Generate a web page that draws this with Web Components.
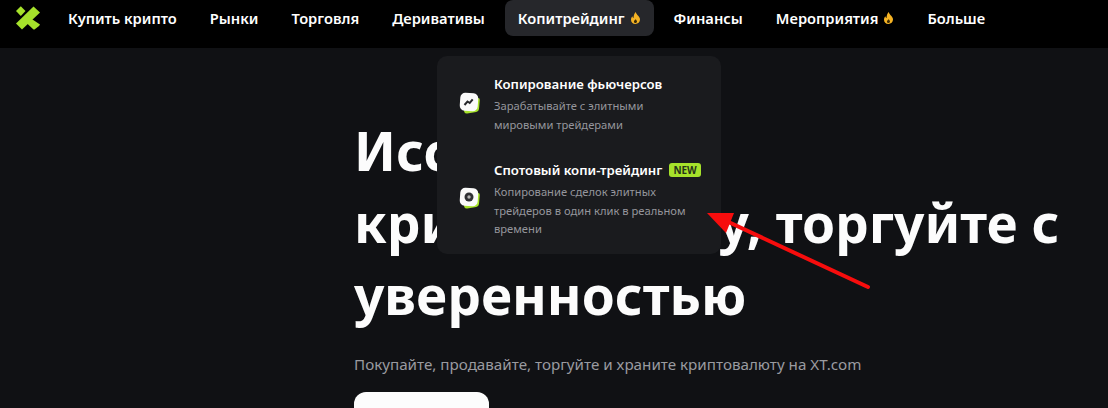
<!DOCTYPE html>
<html lang="ru">
<head>
<meta charset="utf-8">
<title>XT.com</title>
<style>
    html, body { margin: 0; height: 408px; overflow: hidden; background: #101114; }
    body { font-family: 'Noto Sans', 'Open Sans', sans-serif; position: relative; }
</style>
</head>
<body>
<xt-nav>
    <nav-item>Купить крипто</nav-item>
    <nav-item>Рынки</nav-item>
    <nav-item>Торговля</nav-item>
    <nav-item>Деривативы</nav-item>
    <nav-item active hot>Копитрейдинг</nav-item>
    <nav-item>Финансы</nav-item>
    <nav-item hot>Мероприятия</nav-item>
    <nav-item>Больше</nav-item>
</xt-nav>
<xt-hero></xt-hero>
<copy-menu>
    <menu-item title="Копирование фьючерсов" icon="chart">Зарабатывайте с элитными<br>мировыми трейдерами</menu-item>
    <menu-item title="Спотовый копи-трейдинг" icon="eye" badge="NEW">Копирование сделок элитных<br>трейдеров в один клик в реальном<br>времени</menu-item>
</copy-menu>
<red-arrow></red-arrow>

<script>
const FLAME = `<svg width="11" height="12" viewBox="0 0 11 12" style="display:block;margin-left:5px"><path fill="#f5b324" d="M5.800 0c.4 1.800 1.300 2.500 2.400 3.800C9.400 5.100 10 6.300 10 7.600 10 10.100 8 12 5.400 12 2.800 12 1 10.100 1 7.700c0-1.400.6-2.500 1.400-3.400.2 1 .6 1.500 1.200 1.800C3.500 3.800 4.200 1.500 5.800 0z"/><path fill="#3a2a05" d="M5.500 7.200c.9.800 1.500 1.500 1.500 2.400 0 .9-.7 1.500-1.600 1.500S3.900 10.500 3.900 9.600c0-.9.800-1.500 1.600-2.400z"/></svg>`;

class XtNav extends HTMLElement {
    constructor() {
        super();
        this.attachShadow({ mode: 'open' });
        this.shadowRoot.innerHTML = `
            <style>
                :host {
                    display: flex;
                    align-items: flex-start;
                    height: 48px;
                    background: #000;
                    box-sizing: border-box;
                }
                .logo {
                    width: 68px;
                    flex: none;
                    padding: 6px 0 0 16px;
                    box-sizing: border-box;
                }
                .logo svg { display: block; }
                .links {
                    display: flex;
                    gap: 7px;
                    margin-left: -13px;
                }
            </style>
            <div class="logo">
                <svg width="24" height="24" viewBox="0 0 24 24">
                    <path fill="#a6e22b" d="M17.500.5L24 6.500 6 23.500 0 17.500z"/>
                    <path fill="#a6e22b" d="M15 12.500l9 6-1 1.500-4.500 3.500h-1L9.500 16z"/>
                    <path fill="#a6e22b" d="M4.800.3l4.700 4.700-4.700 5L0 5z"/>
                </svg>
            </div>
            <div class="links"><slot></slot></div>
        `;
    }
}

class NavItem extends HTMLElement {
    constructor() {
        super();
        this.attachShadow({ mode: 'open' });
        this.shadowRoot.innerHTML = `
            <style>
                :host {
                    display: flex;
                    align-items: center;
                    height: 36px;
                    padding: 0 13px;
                    border-radius: 8px;
                    color: #fff;
                    font-size: 14.7px;
                    font-weight: 600;
                    white-space: nowrap;
                }
                :host([active]) { background: #26272b; }
            </style>
            <slot></slot><span id="flame"></span>
        `;
    }
    connectedCallback() {
        if (this.hasAttribute('hot')) {
            this.shadowRoot.querySelector('#flame').innerHTML = FLAME;
        }
    }
}

class XtHero extends HTMLElement {
    constructor() {
        super();
        this.attachShadow({ mode: 'open' });
        this.shadowRoot.innerHTML = `
            <style>
                :host {
                    display: block;
                    padding: 67px 0 0 354px;
                }
                h1 {
                    margin: 0;
                    color: #fcfcfc;
                    font-size: 53.2px;
                    font-weight: 700;
                    line-height: 72px;
                    white-space: nowrap;
                }
                p {
                    margin: 21px 0 0;
                    color: #9a9ba0;
                    font-size: 15.2px;
                    line-height: 24px;
                    white-space: nowrap;
                }
                .btn {
                    width: 135px;
                    height: 16px;
                    margin-top: 16px;
                    background: #fcfcfc;
                    border-radius: 12px 12px 0 0;
                }
            </style>
            <h1>Исследуйте<br>криптовалюту, торгуйте с<br>уверенностью</h1>
            <p>Покупайте, продавайте, торгуйте и храните криптовалюту на XT.com</p>
            <div class="btn"></div>
        `;
    }
}

class CopyMenu extends HTMLElement {
    constructor() {
        super();
        this.attachShadow({ mode: 'open' });
        this.shadowRoot.innerHTML = `
            <style>
                :host {
                    position: absolute;
                    left: 437px;
                    top: 56px;
                    width: 284px;
                    height: 198px;
                    padding-top: 18px;
                    box-sizing: border-box;
                    background: #1a1b1e;
                    border-radius: 10px;
                    display: flex;
                    flex-direction: column;
                    gap: 26px;
                }
            </style>
            <slot></slot>
        `;
    }
}

class MenuItem extends HTMLElement {
    constructor() {
        super();
        this.attachShadow({ mode: 'open' });
        const badge = this.getAttribute('badge');
        const mark = this.getAttribute('icon') === 'eye'
            ? `<circle cx="10" cy="10" r="4.500" fill="#2f3034"/><circle cx="10" cy="10" r="1.700" fill="#b5b5b5"/>`
            : `<path d="M5.500 13l3-3.500 2.200 1.500 3-3.700" fill="none" stroke="#26272b" stroke-width="2"/>`;
        this.shadowRoot.innerHTML = `
            <style>
                :host {
                    display: flex;
                    align-items: center;
                    gap: 13px;
                    padding-left: 22px;
                }
                svg { flex: none; display: block; margin-bottom: 3px; }
                .title {
                    display: flex;
                    align-items: center;
                    gap: 7px;
                    color: #fff;
                    font-size: 13.2px;
                    font-weight: 600;
                    line-height: 20px;
                    white-space: nowrap;
                }
                .badge {
                    background: #a6e22b;
                    color: #26331a;
                    font-size: 10px;
                    font-weight: 700;
                    line-height: 14px;
                    padding: 0 4px;
                    border-radius: 3px;
                }
                .desc {
                    margin-top: 3px;
                    color: #95969c;
                    font-size: 11.2px;
                    line-height: 18.5px;
                    white-space: nowrap;
                }
            </style>
            <svg width="22" height="22" viewBox="0 0 22 22">
                <path fill="#a6e22b" d="M5 6h14q2 0 1.800 2l-.8 9q-.3 2.500-2.800 3l-9 1.500q-2 .2-3-1.500z"/>
                <rect x="1" y="1" width="18" height="18" rx="5" fill="#fafafa" transform="rotate(4 10 10)"/>
                ${mark}
            </svg>
            <div>
                <div class="title">${this.getAttribute('title')}${badge ? `<span class="badge">${badge}</span>` : ''}</div>
                <div class="desc"><slot></slot></div>
            </div>
        `;
    }
}

class RedArrow extends HTMLElement {
    constructor() {
        super();
        this.attachShadow({ mode: 'open' });
        this.shadowRoot.innerHTML = `
            <style>
                :host { position: absolute; left: 700px; top: 205px; }
                svg { display: block; }
            </style>
            <svg width="175" height="90" viewBox="0 0 175 90">
                <path d="M168 82L22 14" stroke="#f70d0d" stroke-width="4" stroke-linecap="round"/>
                <path fill="#f70d0d" d="M7 8L34 8 26 28z"/>
            </svg>
        `;
    }
}

customElements.define('xt-nav', XtNav);
customElements.define('nav-item', NavItem);
customElements.define('xt-hero', XtHero);
customElements.define('copy-menu', CopyMenu);
customElements.define('menu-item', MenuItem);
customElements.define('red-arrow', RedArrow);
</script>
</body>
</html>
